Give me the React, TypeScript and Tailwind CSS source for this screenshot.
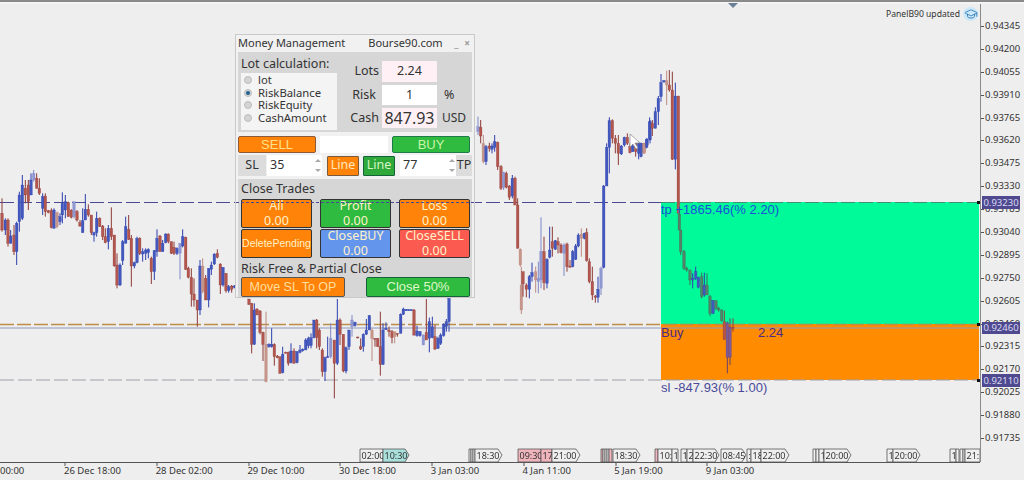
import { GraduationCap } from 'lucide-react';

type Candle = [number, number, number, number, number, string];

const COLORS: Record<string, { wick: string; body: string }> = {
  b: { wick: '#2c3fae', body: '#4358bd' },
  r: { wick: '#8e3a36', body: '#b2564e' },
  l: { wick: '#7f88c9', body: '#8f98d2' },
  m: { wick: '#bd8a80', body: '#c6958a' },
  g: { wick: '#3f6f55', body: '#55806a' },
  p: { wick: '#6a3f70', body: '#7a5a9a' },
};

// traced from the chart, in 3x crop coordinates
const LEFT: Candle[] = [
  [6,115,215,160,210,'r'],[16,175,225,180,210,'b'],[24,175,260,180,250,'r'],[32,210,250,228,250,'b'],[42,195,285,225,275,'r'],
  [50,185,315,190,275,'b'],[58,95,215,105,185,'b'],[67,45,180,75,175,'b'],[76,60,130,85,105,'r'],[85,60,150,75,125,'r'],
  [93,40,105,60,105,'b'],[101,30,65,40,60,'l'],[110,40,85,55,85,'r'],[118,55,105,85,100,'r'],[128,100,165,110,145,'b'],
  [136,100,170,108,155,'r'],[145,150,160,152,158,'r'],[154,145,205,152,203,'r'],[162,145,205,150,205,'b'],[171,155,205,158,200,'m'],
  [180,160,195,170,185,'b'],[187,97,190,130,165,'b'],[196,105,175,125,150,'b'],[205,125,170,128,170,'r'],[214,148,175,150,172,'r'],
  [222,125,175,125,170,'l'],[231,150,185,155,180,'r'],[240,180,200,188,198,'r'],[248,145,218,182,218,'b'],[256,102,180,148,180,'b'],
  [265,133,170,148,165,'r'],[274,165,225,165,218,'r'],[282,215,245,218,225,'b'],[290,155,230,175,218,'b'],[299,172,200,175,200,'r'],
  [308,195,240,198,230,'r'],[316,205,250,230,248,'r'],[325,195,268,205,245,'b'],[334,142,240,205,230,'r'],[343,225,320,225,318,'r'],
  [351,280,385,315,375,'r'],[360,310,378,315,375,'b'],[368,240,315,245,302,'b'],[377,170,250,200,250,'b'],[386,165,240,208,238,'r'],
  [394,225,380,235,318,'r'],[403,305,325,308,318,'b'],[411,230,310,235,308,'b'],[419,232,285,235,280,'r'],[428,265,305,275,282,'b'],
  [437,265,300,270,280,'b'],[445,265,295,268,278,'b'],[454,290,372,295,335,'r'],[463,270,360,272,335,'b'],[471,208,290,235,275,'b'],
  [480,225,275,228,275,'r'],[488,240,275,250,275,'b'],[497,220,250,222,248,'b'],[505,220,250,222,245,'r'],[514,245,282,245,280,'r'],
  [522,245,285,262,280,'r'],[531,262,285,265,280,'b'],[540,250,358,250,280,'l'],[548,208,262,230,258,'b'],[557,230,330,232,328,'r'],
  [565,320,355,325,352,'r'],[574,325,440,352,402,'r'],[582,355,440,402,420,'r'],[592,420,500,420,450,'r'],[600,300,465,318,450,'b'],
  [608,295,400,318,395,'m'],[617,345,420,355,420,'r'],[626,325,442,325,420,'b'],[634,305,345,315,328,'b'],[643,280,315,282,312,'b'],
  [652,268,295,280,292,'r'],[661,310,402,312,375,'r'],[669,322,380,322,375,'b'],[678,340,398,340,392,'r'],[686,375,398,380,392,'b'],
  [695,375,398,378,388,'r'],[703,375,385,378,382,'b'],
];

const MIDDLE: Candle[] = [
  [27,12,30,12,28,'r'],[35,25,175,25,148,'r'],[43,25,150,45,148,'b'],[51,40,60,42,60,'r'],[60,45,118,48,112,'r'],
  [69,110,198,112,148,'r'],[78,50,262,148,260,'m'],[87,145,158,148,155,'b'],[95,100,158,148,155,'b'],[103,145,212,148,185,'r'],
  [112,180,190,183,188,'r'],[120,185,236,185,235,'r'],[128,155,235,178,233,'b'],[137,170,175,172,174,'r'],[145,170,212,172,205,'r'],
  [153,145,205,168,203,'b'],[162,160,205,168,205,'r'],[171,168,205,170,203,'b'],[180,150,175,165,172,'b'],[188,160,170,163,167,'b'],
  [197,130,165,135,165,'b'],[205,125,160,130,152,'b'],[213,115,160,128,152,'b'],[222,75,130,75,128,'b'],[230,72,160,75,128,'r'],
  [238,100,165,105,155,'r'],[247,160,245,165,230,'r'],[255,185,258,188,230,'b'],[263,125,188,185,187,'b'],[272,85,190,130,185,'l'],
  [283,135,310,135,205,'r'],[292,12,210,75,205,'b'],[300,70,150,75,118,'r'],[310,118,232,118,228,'r'],[318,155,235,158,228,'b'],
  [327,105,165,105,155,'b'],[336,60,125,75,95,'l'],[345,80,95,82,92,'b'],[353,125,130,126,129,'r'],[362,130,165,155,162,'r'],
  [370,115,170,118,155,'b'],[379,72,120,105,118,'b'],[388,60,105,62,105,'b'],[396,100,198,105,130,'m'],[405,130,155,130,133,'r'],
  [413,130,155,130,155,'r'],[421,50,242,155,208,'r'],[429,85,210,105,208,'b'],[438,82,105,100,104,'b'],[447,95,125,105,110,'r'],
  [456,105,145,110,128,'r'],[464,110,145,110,125,'m'],[472,115,125,115,118,'r'],[482,55,115,58,115,'b'],[490,38,60,42,58,'b'],
  [498,42,48,43,47,'b'],[506,43,47,44,46,'b'],[514,43,47,44,46,'b'],[522,42,122,45,120,'r'],[531,92,125,108,122,'b'],
  [540,108,125,110,122,'b'],[550,118,150,120,150,'l'],[559,12,135,112,135,'r'],[568,68,172,80,130,'b'],[577,65,130,95,128,'b'],
  [585,90,165,125,162,'r'],[594,125,162,130,160,'b'],[602,115,150,120,145,'b'],[611,85,125,88,122,'b'],[619,72,110,80,95,'b'],
  [627,10,110,10,80,'b'],
];

const RIGHT: Candle[] = [
  [24,20,75,50,65,'l'],[32,30,100,52,78,'r'],[40,75,160,100,155,'m'],[48,105,165,110,155,'b'],[58,98,125,108,115,'r'],
  [66,100,130,108,118,'b'],[74,75,125,95,112,'b'],[83,95,180,97,170,'r'],[93,165,240,170,235,'r'],[101,185,240,188,232,'l'],
  [109,185,235,190,232,'r'],[118,225,270,228,262,'r'],[127,195,265,205,258,'b'],[135,200,285,205,285,'r'],[143,265,415,285,415,'r'],
  [151,415,470,418,465,'m'],[154,470,612,525,600,'m'],[159,485,560,485,522,'r'],[169,520,562,525,538,'r'],[178,495,565,500,538,'b'],
  [186,458,515,488,500,'b'],[197,470,548,485,510,'m'],[205,455,550,505,515,'l'],[213,322,535,425,510,'l'],[222,380,540,425,518,'r'],
  [231,445,535,448,520,'b'],[239,350,445,420,442,'b'],[247,350,440,395,415,'r'],[256,390,420,392,418,'b'],[264,382,430,395,405,'r'],
  [273,400,430,405,428,'r'],[282,400,498,405,430,'l'],[291,398,485,402,470,'r'],[300,450,472,468,472,'r'],[308,420,472,425,470,'b'],
  [317,402,450,408,448,'b'],[325,370,412,375,408,'b'],[334,355,440,372,385,'m'],[343,368,388,370,385,'b'],[350,355,455,368,452,'r'],
  [358,445,520,455,515,'r'],[367,470,570,515,555,'r'],[376,555,578,558,562,'r'],[384,500,578,538,562,'b'],[393,470,555,475,535,'l'],
  [401,225,475,228,472,'b'],[410,100,195,112,228,'b'],[418,22,190,32,112,'b'],[427,28,100,32,85,'r'],[436,75,130,85,100,'r'],
  [445,75,165,100,130,'r'],[454,105,135,108,132,'b'],[463,80,110,82,105,'b'],[472,70,105,82,100,'r'],[480,100,130,110,128,'r'],
  [488,100,125,108,125,'b'],[497,95,140,100,125,'r'],[506,95,148,100,130,'b'],[514,100,130,102,128,'l'],[522,100,130,100,128,'r'],
  [531,85,110,90,105,'b'],[540,30,100,35,90,'b'],
];

const PEAK: Candle[] = [
  [3,248,292,250,290,'b'],[12,248,282,250,280,'m'],[20,235,265,238,262,'b'],[29,172,240,188,235,'b'],[37,180,228,190,205,'r'],
  [46,142,205,155,205,'b'],[55,108,195,115,155,'b'],[63,42,125,68,110,'b'],[72,60,68,62,66,'b'],[80,32,135,62,75,'m'],
  [88,30,95,75,90,'r'],[97,35,300,90,298,'r'],[106,68,328,108,298,'b'],[115,108,460,108,460,'r'],[118,460,510,462,510,'g'],
];

const DROP: Candle[] = [
  [122,0,75,0,65,'g'],[132,60,120,65,115,'g'],[140,110,125,115,120,'g'],[150,118,165,122,150,'g'],[158,130,175,145,150,'b'],
  [167,110,150,125,145,'b'],[175,140,175,142,172,'b'],[185,128,205,140,200,'g'],[193,128,200,165,195,'b'],[201,130,195,165,195,'g'],
  [210,195,258,200,250,'g'],[219,210,252,212,250,'b'],[228,212,240,212,235,'g'],[236,230,245,235,240,'g'],[245,238,275,240,272,'g'],
  [253,242,330,275,328,'r'],[262,275,430,278,382,'p'],[270,265,405,292,382,'p'],[279,265,305,292,295,'r'],
];

const GROUPS: [number, number, Candle[]][] = [
  [0, 160, LEFT], [240, 295, MIDDLE], [470, 110, RIGHT], [640, 60, PEAK], [640, 230, DROP],
];

const PRICES = ['0.94345','0.94200','0.94055','0.93910','0.93765','0.93620','0.93475','0.93330','0.93185','0.93040','0.92895','0.92750','0.92605','0.92460','0.92315','0.92170','0.92025','0.91880','0.91735'];
const DATES = ['26 Dec 18:00','28 Dec 02:00','29 Dec 10:00','30 Dec 18:00','3 Jan 03:00','4 Jan 11:00','5 Jan 19:00','9 Jan 03:00'];

// x, width, label, fill, arrow end
const TAGS: [number, number, string, string, boolean][] = [
  [360,23,'02:00','#efefef',false],[383,26,'10:30','#a9e0dc',true],[469,2,'','#efefef',false],[471,2,'','#efefef',false],[473,2,'','#efefef',false],
  [475,27,'18:30','#efefef',true],[518,23,'09:30','#f0b4bc',false],[541,11,'17','#f0b4bc',false],[552,28,'21:00','#efefef',true],
  [601,2,'','#f0b4bc',false],[603,2,'','#efefef',false],[605,2,'','#efefef',false],[607,2,'','#efefef',false],[609,3,'','#f0b4bc',false],[613,27,'18:30','#efefef',true],
  [655,3,'','#f0b4bc',false],[658,14,'10:','#efefef',false],[672,6,'1','#efefef',false],[681,6,'1','#efefef',false],[687,6,'2','#efefef',false],
  [693,26,'22:30','#efefef',true],[721,25,'08:45','#efefef',true],[747,4,':','#efefef',false],[751,10,'18','#efefef',false],[761,28,'22:00','#efefef',true],
  [813,3,'','#efefef',false],[816,3,'','#efefef',false],[819,5,'1','#efefef',false],[824,27,'20:00','#efefef',true],[887,6,'1','#efefef',false],[893,27,'20:00','#efefef',true],
  [950,6,'1','#efefef',false],[956,3,'','#efefef',false],[960,3,'','#efefef',false],[963,2,'','#efefef',false],[965,15,'21:','#efefef',false],
];

function CandleMark({ c, ox, oy }: { c: Candle; ox: number; oy: number }) {
  const [zx, wt, wb, bt, bb, k] = c;
  const x = ox + zx / 3;
  const col = COLORS[k];
  return (
    <g>
      <line x1={x} x2={x} y1={oy + wt / 3} y2={oy + wb / 3} stroke={col.wick} strokeWidth={1} />
      <rect x={x - 1.3} y={oy + bt / 3} width={2.6} height={Math.max(1, (bb - bt) / 3)} fill={col.body} stroke={col.wick} strokeWidth={0.3} />
    </g>
  );
}

function Chart() {
  return (
    <svg width={980} height={476} viewBox="0 0 980 476" className="block blur-[0.35px]">
      <rect x={661} y={202} width={318} height={122} fill="#00fa9a" />
      <rect x={661} y={324} width={318} height={56} fill="#ff8c00" />
      <line x1={0} x2={661} y1={202.5} y2={202.5} stroke="#4a4a94" strokeDasharray="14 4" />
      <line x1={661} x2={979} y1={202.5} y2={202.5} stroke="#3f8f7a" strokeDasharray="14 4" />
      <line x1={0} x2={979} y1={328} y2={328} stroke="#8f98bd" />
      <line x1={0} x2={979} y1={324.5} y2={324.5} stroke="#bb8c4a" strokeWidth={1.4} strokeDasharray="14 3" />
      <line x1={0} x2={979} y1={380} y2={380} stroke="#9e9ea8" strokeWidth={1.2} strokeDasharray="14 4" />
      {GROUPS.map(([ox, oy, list]) => list.map((c, i) => <CandleMark key={`${ox}-${i}`} c={c} ox={ox} oy={oy} />))}
      <polygon points="630,134 630,147 633,144 636,149 638,148 635,143 640,143" fill="#fff" stroke="#888" strokeWidth={0.7} />
      <rect x={977} y={201} width={3} height={3} fill="#111" />
      <rect x={977} y={323} width={3} height={3} fill="#111" />
      <rect x={977} y={379} width={3} height={3} fill="#111" />
      {TAGS.map(([x, w, label, fill, arrow]) => (
        <g key={x}>
          <path
            d={arrow ? `M${x} 449H${x + w - 4}L${x + w} 455L${x + w - 4} 462H${x}Z` : `M${x} 449H${x + w}V462H${x}Z`}
            fill={fill}
            stroke="#555"
            strokeWidth={0.8}
          />
          {label && (
            <text x={x + 1.5} y={459} fontSize={9} fill="#333" fontFamily="'Noto Sans', sans-serif">{label}</text>
          )}
        </g>
      ))}
      <line x1={0} x2={980} y1={462.5} y2={462.5} stroke="#555" />
      {[65, 157, 249, 340, 432, 524, 616, 707].map(x => (
        <line key={x} x1={x} x2={x} y1={462} y2={466} stroke="#555" />
      ))}
    </svg>
  );
}

function Radio({ label, on }: { label: string; on?: boolean }) {
  return (
    <div className="flex items-center h-[12.6px] gap-[6px]">
      <span className="w-[8px] h-[8px] rounded-full bg-[#d4d4d4] border border-[#bcbcbc] flex items-center justify-center">
        {on && <span className="w-[4px] h-[4px] rounded-full bg-[#1f5f8f]" />}
      </span>
      <span>{label}</span>
    </div>
  );
}

function Btn({ top, sub, cls }: { top: string; sub: string; cls: string }) {
  return (
    <div className={`w-[71px] h-[29px] rounded-[2px] border border-[#333] flex flex-col items-center leading-[14px] text-[12.5px] ${cls}`}>
      <span className="-mt-[1px]">{top}</span>
      <span className="mt-[1px]">{sub}</span>
    </div>
  );
}

function Spinner() {
  return (
    <span className="ml-auto mr-[1px] flex flex-col gap-[7px] text-[#aaa] leading-none">
      <span className="w-0 h-0 border-x-[3px] border-x-transparent border-b-[3px] border-b-[#aaa]" />
      <span className="w-0 h-0 border-x-[3px] border-x-transparent border-t-[3px] border-t-[#aaa]" />
    </span>
  );
}

function Panel() {
  return (
    <div className="absolute left-[235px] top-[34px] w-[240px] h-[264px] bg-[#f1f1f1] border border-[#c9c9c9] font-['Noto_Sans',sans-serif] text-[#333] text-[12px] flex flex-col px-[2px]">
      <div className="h-[17px] flex items-center pr-[2px] text-[11px]">
        <span>Money Management</span>
        <span className="ml-[23px]">Bourse90.com</span>
        <span className="ml-auto text-[#999] text-[10px] font-bold">_</span>
        <span className="ml-[6px] text-[#999] text-[10px] font-bold">×</span>
      </div>
      <div className="h-[80px] bg-[#d6d6d6] flex gap-[5px] pl-[3px] pt-[3px]">
        <div className="w-[96px] flex flex-col">
          <div className="h-[17px] leading-[18px] text-[12.5px]">Lot calculation:</div>
          <div className="h-[57px] mt-[1px] bg-[#f4f4f4] pl-[3px] pt-[1px] leading-[12px] text-[11.3px]">
            <Radio label="lot" />
            <Radio label="RiskBalance" on />
            <Radio label="RiskEquity" />
            <Radio label="CashAmount" />
          </div>
        </div>
        <div className="flex flex-col gap-[3px] pt-[6px] text-[12.5px]">
          <div className="flex items-center h-[21px]">
            <span className="w-[40px] text-right pr-[3px]">Lots</span>
            <span className="w-[55px] h-full bg-[#fff0f5] flex items-center justify-center">2.24</span>
          </div>
          <div className="flex items-center h-[20px]">
            <span className="w-[40px] text-right pr-[6px]">Risk</span>
            <span className="w-[55px] h-full bg-white flex items-center justify-center">1</span>
            <span className="ml-[7px]">%</span>
          </div>
          <div className="flex items-center h-[20px]">
            <span className="w-[40px] text-right pr-[3px]">Cash</span>
            <span className="w-[55px] h-full bg-[#fff0f5] flex items-center justify-center text-[16px]">847.93</span>
            <span className="ml-[5px] text-[12px]">USD</span>
          </div>
        </div>
      </div>
      <div className="mt-[4px] h-[17px] flex gap-[4px] font-['Liberation_Sans',sans-serif] text-[13px] leading-[16px] text-center">
        <div className="w-[78px] rounded-[2px] bg-[#ff8308] border border-[#8a5a3a] text-[#ffe08a]">SELL</div>
        <div className="w-[68px] bg-white" />
        <div className="w-[78px] rounded-[2px] bg-[#2fbb3f] border border-[#1f7a4a] text-[#c8f5a8]">BUY</div>
      </div>
      <div className="mt-[2px] h-[21px] flex items-center text-[12.5px]">
        <span className="w-[28px] h-full bg-[#dcdcdc] flex items-center justify-center">SL</span>
        <span className="ml-[1px] w-[55px] h-full bg-white pl-[3px] flex items-center">35<Spinner /></span>
        <span className="ml-[5px] w-[32px] h-[20px] rounded-[1px] bg-[#ff8308] border border-[#7a5a3a] text-[#ffe9c0] flex items-center justify-center">Line</span>
        <span className="ml-[4px] w-[32px] h-[20px] rounded-[1px] bg-[#2fa83a] border border-[#14613a] text-[#d5f7c5] flex items-center justify-center">Line</span>
        <span className="ml-[5px] w-[56px] h-full bg-white pl-[3px] flex items-center">77<Spinner /></span>
        <span className="w-[16px] h-full bg-[#dcdcdc] flex items-center justify-center">TP</span>
      </div>
      <div className="mt-[3px] flex-1 bg-[#d6d6d6] pl-[3px] pr-[2px] flex flex-col">
        <div className="h-[20px] leading-[20px] text-[12.5px]">Close Trades</div>
        <div className="flex gap-[8px] text-[#fff2c8]">
          <Btn top="All" sub="0.00" cls="bg-[#ff8308]" />
          <Btn top="Profit" sub="0.00" cls="bg-[#2fbb3f]" />
          <Btn top="Loss" sub="0.00" cls="bg-[#ff8308]" />
        </div>
        <div className="mt-[1px] flex gap-[8px] text-[#fff2c8]">
          <div className="w-[71px] h-[29px] rounded-[2px] border border-[#333] bg-[#ff8308] flex items-center justify-center font-['Liberation_Sans',sans-serif] text-[10.5px]">DeletePending</div>
          <Btn top="CloseBUY" sub="0.00" cls="bg-[#6495ed]" />
          <Btn top="CloseSELL" sub="0.00" cls="bg-[#fa5a50]" />
        </div>
        <div className="h-[16px] mt-[3px] leading-[16px] text-[12.5px]">Risk Free &amp; Partial Close</div>
        <div className="flex justify-between font-['Liberation_Sans',sans-serif]">
          <div className="w-[104px] h-[20px] rounded-[2px] border border-[#555] bg-[#ff8308] text-[#ffdf9f] text-[12.5px] leading-[18px] text-center">Move SL To OP</div>
          <div className="w-[104px] h-[20px] rounded-[2px] border border-[#14613a] bg-[#2fbb3f] text-[#dff8c8] text-[13px] leading-[18px] text-center">Close 50%</div>
        </div>
      </div>
    </div>
  );
}

export default function App() {
  return (
    <div className="relative w-[1024px] h-[480px] overflow-hidden bg-[#eeeeee] font-['Noto_Sans',sans-serif] text-[#333]">
      <div className="h-[4px] border-t-[2px] border-[#8a8a8a] bg-[#f4f4f4]" />
      <div className="flex h-[476px]">
        <div className="relative w-[980px] -mt-[4px]">
          <Chart />
        </div>
        <div className="flex-1 border-l-[1px] border-[#8a8a8a] h-[458px] pt-[11px] text-[9.5px] leading-[22.9px] flex flex-col">
          {PRICES.map(p => (
            <div key={p} className="flex items-center h-[22.9px] shrink-0">
              <span className="w-[3px] h-[1px] bg-[#555] mr-[1px]" />
              <span>{p}</span>
            </div>
          ))}
        </div>
      </div>

      <div className="absolute left-0 right-[44px] top-[465px] flex text-[9.5px] leading-[12px] pl-0">
        <span className="w-[64px] shrink-0">00:00</span>
        {DATES.map(d => <span key={d} className="w-[91.7px] shrink-0">{d}</span>)}
      </div>

      <svg width={12} height={6} viewBox="0 0 12 6" className="absolute left-[727px] top-[3px]">
        <polygon points="1,0 11,0 6,5" fill="#6b7f95" />
      </svg>

      <div className="absolute right-[46px] top-[7px] flex items-center text-[8.6px] gap-[3px]">
        <span>PanelB90 updated</span>
        <span className="w-[15px] h-[14px] rounded-full bg-[#cfe8f8] flex items-center justify-center text-[#2a7ab8]">
          <GraduationCap size={14} strokeWidth={1.5} />
        </span>
      </div>

      <Panel />
      <div className="absolute left-[236px] top-[202px] w-[238px] border-t border-dashed border-[#4a4a94]" />

      <div className="absolute left-[661px] top-[202px] text-[13px] leading-[16px] font-['Liberation_Sans',sans-serif] text-[#1a50d8]">tp +1865.46(% 2.20)</div>
      <div className="absolute left-[661px] top-[325px] text-[13px] leading-[16px] font-['Liberation_Sans',sans-serif] text-[#4b2a8a]">Buy</div>
      <div className="absolute left-[758px] top-[325px] text-[13px] leading-[16px] font-['Liberation_Sans',sans-serif] text-[#4b2a8a]">2.24</div>
      <div className="absolute left-[661px] top-[380px] text-[13px] leading-[16px] font-['Liberation_Sans',sans-serif] text-[#4a4a9a]">sl -847.93(% 1.00)</div>

      <div className="absolute left-[982px] top-[196px] w-[38px] h-[13px] bg-[#4f4a90] text-[#d8d8f0] text-[9.5px] leading-[13px] text-center">0.93230</div>
      <div className="absolute left-[982px] top-[322px] w-[38px] h-[12px] bg-[#4f4a90] text-[#d8d8f0] text-[9.5px] leading-[12px] text-center">0.92460</div>
      <div className="absolute left-[982px] top-[374px] w-[38px] h-[13px] bg-[#4f4a90] text-[#d8d8f0] text-[9.5px] leading-[13px] text-center">0.92110</div>
    </div>
  );
}
